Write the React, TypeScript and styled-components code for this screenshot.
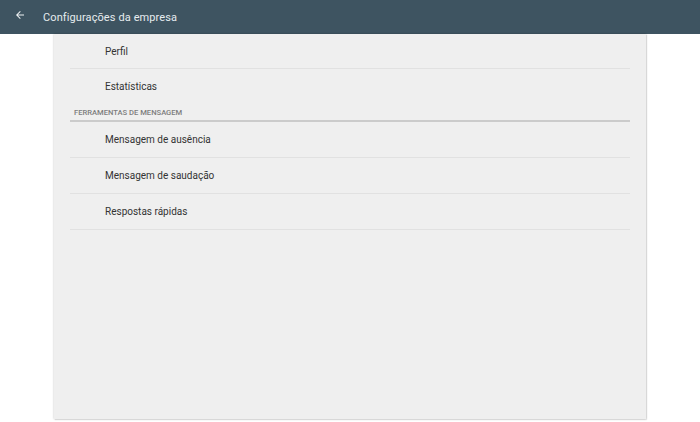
import React, { FC } from 'react'
import styled, { createGlobalStyle } from 'styled-components'

const GlobalStyle = createGlobalStyle`
  html, body {
    margin: 0;
    padding: 0;
    background: #ffffff;
    font-family: Roboto, "Liberation Sans", Arial, sans-serif;
  }
`

const Page = styled.div`
  width: 700px;
  height: 422px;
  display: flex;
  flex-direction: column;
  overflow: hidden;
`

const TopBar = styled.header`
  height: 34px;
  flex-shrink: 0;
  background: #3e5461;
  display: flex;
  align-items: center;
  padding-left: 13px;
  color: #eef2f4;
`

const BackButton = styled.button`
  width: 14px;
  height: 14px;
  padding: 0;
  border: 0;
  background: transparent;
  color: inherit;
  display: flex;
  align-items: center;
  justify-content: center;
  margin-top: -5px;
  cursor: pointer;
`

const Title = styled.h1`
  margin: 0 0 0 16px;
  font-size: 11px;
  font-weight: 400;
  color: #e6ecef;
  letter-spacing: 0.1px;
`

const Card = styled.main`
  margin: 0 54px 3px;
  flex: 1;
  background: #efefef;
  box-shadow: 0 0 2px rgba(0, 0, 0, 0.25), 1px 1px 1px rgba(0, 0, 0, 0.08);
  padding: 0 16px;
  display: flex;
  flex-direction: column;
`

const Row = styled.div<{ $divider?: boolean; $tall?: boolean }>`
  box-sizing: border-box;
  height: ${p => (p.$tall ? 36 : 35)}px;
  display: flex;
  align-items: center;
  padding-left: 35px;
  font-size: 10px;
  color: #333333;
  border-bottom: 1px solid ${p => (p.$divider ? '#e1e1e1' : 'transparent')};
  flex-shrink: 0;
`

const Section = styled.div`
  box-sizing: border-box;
  height: 18px;
  display: flex;
  align-items: center;
  padding-left: 4px;
  font-size: 7.6px;
  font-weight: 500;
  color: #7d7d7d;
  text-transform: uppercase;
  border-bottom: 2px solid #cbcbcb;
  flex-shrink: 0;
`

const BackArrow: FC = () => (
  <svg width="12" height="12" viewBox="0 0 24 24" fill="currentColor">
    <path d="M20 11H7.83l5.59-5.59L12 4l-8 8 8 8 1.41-1.41L7.83 13H20v-2z" />
  </svg>
)

const App: FC = () => (
  <>
    <GlobalStyle />
    <Page>
      <TopBar>
        <BackButton aria-label="Voltar">
          <BackArrow />
        </BackButton>
        <Title>Configurações da empresa</Title>
      </TopBar>
      <Card>
        <Row $divider>Perfil</Row>
        <Row>Estatísticas</Row>
        <Section>Ferramentas de mensagem</Section>
        <Row $divider $tall>Mensagem de ausência</Row>
        <Row $divider $tall>Mensagem de saudação</Row>
        <Row $divider $tall>Respostas rápidas</Row>
      </Card>
    </Page>
  </>
)

export default App
